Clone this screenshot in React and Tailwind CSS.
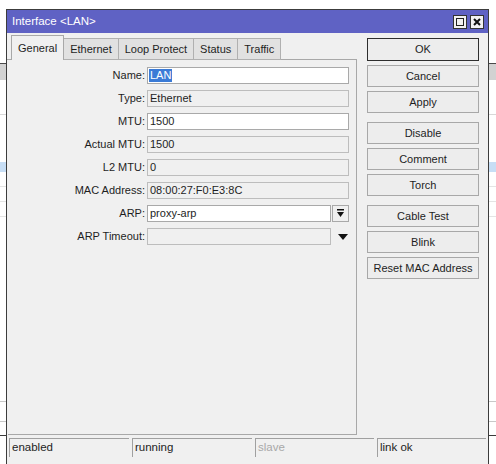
import React from "react";

const fields = [
  { label: "Name", value: "LAN", edit: true, selected: true },
  { label: "Type", value: "Ethernet" },
  { label: "MTU", value: "1500", edit: true },
  { label: "Actual MTU", value: "1500" },
  { label: "L2 MTU", value: "0" },
  { label: "MAC Address", value: "08:00:27:F0:E3:8C" },
  { label: "ARP", value: "proxy-arp", edit: true, combo: true },
  { label: "ARP Timeout", value: "", arrow: true },
];

const tabs = ["General", "Ethernet", "Loop Protect", "Status", "Traffic"];

function Btn({ children, primary, gapAbove }) {
  return (
    <div
      className={`flex items-center justify-center bg-[#ededed] border ${
        primary ? "border-[#2e2e2e] h-[23px]" : "border-[#a8a8a8] h-[22px]"
      } ${gapAbove ? "mt-[5px]" : ""}`}
    >
      {children}
    </div>
  );
}

function Field({ f }) {
  const box = f.edit
    ? "bg-white border-[#a9a9a9]"
    : "bg-[#f0f0f0] border-[#bdbdbd]";
  const width = f.combo || f.arrow ? "w-[184px]" : "w-[202px]";
  return (
    <div className="flex items-center h-[17px]">
      <div className="w-[137px] text-right whitespace-nowrap">{f.label}:</div>
      <div className={`ml-[2px] h-[17px] border ${box} ${width} flex items-center pl-[1px] leading-none`}>
        {f.selected ? (
          <span className="bg-[#3b7bd6] text-white px-[1px] h-[13px] flex items-center">{f.value}</span>
        ) : (
          <span className="pl-[1px]">{f.value}</span>
        )}
      </div>
      {f.combo && (
        <div className="ml-[1px] w-[17px] h-[17px] border border-[#a9a9a9] bg-[#f0f0f0] flex items-center justify-center">
          <svg width="9" height="9" viewBox="0 0 9 9">
            <rect x="1" y="0" width="7" height="1.5" fill="#111" />
            <path d="M1 3 H8 L4.5 8 Z" fill="#111" />
          </svg>
        </div>
      )}
      {f.arrow && (
        <div className="ml-[7px] w-[10px] flex items-center justify-center">
          <svg width="10" height="6" viewBox="0 0 10 6">
            <path d="M0 0 H10 L5 6 Z" fill="#111" />
          </svg>
        </div>
      )}
    </div>
  );
}

export default function App() {
  return (
    <div
      className="relative w-[496px] h-[464px] overflow-hidden bg-white text-[11px] text-[#1e1e1e]"
      style={{ fontFamily: '"Liberation Sans", Arial, sans-serif' }}
    >
      {/* list window behind the dialog */}
      <div className="h-[63px]" />
      <div className="h-[17px] border-t border-[#4a4a4a] bg-[#d2d2d2]" />
      <div className="h-[35px] border-b border-[#d8d8d8]" />
      <div className="h-[47px]" />
      <div className="h-[10px] bg-[#c7def5]" />
      <div className="h-[15px] border-b border-[#e4e4e4]" />
      <div className="h-[15px] border-b border-[#e4e4e4]" />
      <div className="h-[15px] border-b border-[#e4e4e4]" />
      <div className="h-[185px] border-b border-[#c8c8c8]" />
      <div className="h-[20px] border-b border-[#c8c8c8]" />
      <div className="h-[14px] border-b border-[#3a3a3a]" />

      {/* dialog window */}
      <div className="absolute left-[6px] top-[9px] w-[483px] h-[458px] border border-[#3c3c3c] bg-[#f0f0f0] flex flex-col">
        <div className="h-[23px] bg-[#5f62c4] flex items-center pl-[5px] pr-[4px] text-white text-[11.5px]">
          <span className="flex-1">Interface &lt;LAN&gt;</span>
          <div className="flex gap-[3px]">
            <div className="w-[14px] h-[14px] bg-[#f2f2f2] border border-[#333] flex items-center justify-center">
              <div className="w-[8px] h-[8px] border border-[#222]" />
            </div>
            <div className="w-[14px] h-[14px] bg-[#f2f2f2] border border-[#333] flex items-center justify-center">
              <svg width="8" height="8" viewBox="0 0 8 8">
                <path d="M1 1 L7 7 M7 1 L1 7" stroke="#111" strokeWidth="2" />
              </svg>
            </div>
          </div>
        </div>

        <div className="flex flex-1 pt-[2px]">
          <div className="w-[350px] flex flex-col">
            <div className="flex items-end h-[25px]">
              <div className="w-[4px] h-full border-b border-[#a8a8a8]" />
              {tabs.map((t, i) =>
                i === 0 ? (
                  <div key={t} className="h-[25px] px-[6px] flex items-center border-t border-l border-r border-[#a8a8a8] bg-[#f0f0f0]">
                    {t}
                  </div>
                ) : (
                  <div key={t} className="h-[22px] px-[6px] flex items-center border-t border-r border-b border-[#b0b0b0] bg-[#e1e1e1]">
                    {t}
                  </div>
                )
              )}
              <div className="flex-1 h-full border-b border-[#a8a8a8]" />
            </div>
            <div className="ml-[1px] flex-1 border-r border-b border-[#a8a8a8] flex flex-col gap-[6px] pt-[7px]">
              {fields.map((f) => (
                <Field key={f.label} f={f} />
              ))}
            </div>
          </div>

          <div className="ml-[10px] w-[112px] pt-[3px] flex flex-col gap-[4px]">
            <Btn primary>OK</Btn>
            <Btn>Cancel</Btn>
            <Btn>Apply</Btn>
            <Btn gapAbove>Disable</Btn>
            <Btn>Comment</Btn>
            <Btn>Torch</Btn>
            <Btn gapAbove>Cable Test</Btn>
            <Btn>Blink</Btn>
            <Btn>Reset MAC Address</Btn>
          </div>
        </div>

        <div className="flex gap-[3px] px-[2px] pt-[3px] pb-[9px] text-[11.5px]">
          <div className="w-[120px] h-[19px] border-t border-l border-[#a0a0a0] pl-[2px] flex items-center">enabled</div>
          <div className="w-[120px] h-[19px] border-t border-l border-[#a0a0a0] pl-[2px] flex items-center">running</div>
          <div className="w-[119px] h-[19px] border-t border-l border-[#a0a0a0] pl-[2px] flex items-center text-[#a8a8a8]">slave</div>
          <div className="flex-1 h-[19px] border-t border-l border-[#a0a0a0] pl-[2px] flex items-center">link ok</div>
        </div>
      </div>
    </div>
  );
}
